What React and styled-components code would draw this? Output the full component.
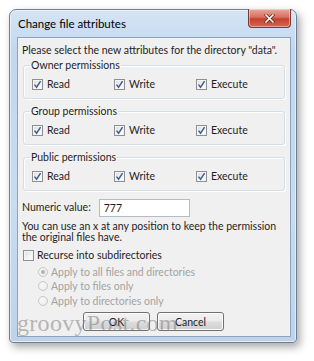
import React from "react";
import styled, { createGlobalStyle } from "styled-components";

const GlobalStyle = createGlobalStyle`
    html, body {
        margin: 0;
        padding: 0;
        background: #ffffff;
    }
    body {
        font-family: Lato, "Open Sans", sans-serif;
        font-size: 10.5px;
        color: #1e1e1e;
    }
`;

const Page = styled.div`
    padding: 9px 0 0 9px;
    width: 314px;
    height: 361px;
    box-sizing: border-box;
`;

const Window = styled.div`
    position: relative;
    width: 288px;
    height: 334px;
    box-sizing: border-box;
    border: 1px solid #6e7f93;
    border-radius: 7px 7px 4px 4px;
    background: linear-gradient(180deg, #d6e5f5 0%, #c2d7ee 12%, #c8dbef 60%, #bed3ea 100%);
    box-shadow: 3px 4px 9px rgba(0, 0, 0, 0.35), inset 0 0 0 1px rgba(255, 255, 255, 0.55);
    display: flex;
    flex-direction: column;
    padding: 0 5px 5px 7px;
`;

const TitleBar = styled.div`
    height: 27px;
    display: flex;
    align-items: flex-start;
    justify-content: space-between;
`;

const Title = styled.div`
    font-size: 11.5px;
    color: #000;
    padding-top: 7px;
    padding-left: 1px;
`;

const CloseButton = styled.div`
    width: 43px;
    height: 19px;
    margin-top: -1px;
    box-sizing: border-box;
    border: 1px solid #7d3a33;
    border-top: none;
    border-radius: 0 0 4px 4px;
    background: linear-gradient(180deg, #e9a99c 0%, #d9705f 45%, #c4422f 55%, #d36a52 100%);
    box-shadow: inset 0 0 0 1px rgba(255, 255, 255, 0.4);
    display: flex;
    align-items: center;
    justify-content: center;
`;

const Client = styled.div`
    flex: 1;
    background: #f0f0f0;
    border: 1px solid #8ea3bd;
    padding: 6px 5px 0 4px;
    display: flex;
    flex-direction: column;
    position: relative;
`;

const Text = styled.div`
    line-height: 12.5px;
    color: ${(p) => (p.$disabled ? "#a3a3a3" : "#1e1e1e")};
`;

const Group = styled.fieldset`
    margin: ${(p) => (p.$first ? "2px" : "6px")} 0 0 1px;
    padding: 0 6px 7px 8px;
    border: 1px solid #d5dde5;
    border-radius: 3px;
    box-shadow: inset 1px 1px 0 #fff, 1px 1px 0 #fff;
    min-width: 0;
`;

const Legend = styled.legend`
    padding: 0 1px;
    margin-left: -2px;
    line-height: 13px;
`;

const CheckRow = styled.div`
    display: grid;
    grid-template-columns: 82px 82px 1fr;
    margin-top: 6px;
`;

const CheckItem = styled.label`
    display: flex;
    align-items: center;
    gap: 4px;
    height: 13px;
    color: #1e1e1e;
`;

const Box = styled.span`
    width: 11px;
    height: 11px;
    box-sizing: border-box;
    border: 1px solid #8e8f8f;
    background: linear-gradient(135deg, #dcdcdc 0%, #f4f4f4 60%, #ffffff 100%);
    box-shadow: inset 0 0 0 1px #f5f5f5;
    display: flex;
    align-items: center;
    justify-content: center;
    flex-shrink: 0;
`;

const Radio = styled.span`
    width: 10px;
    height: 10px;
    box-sizing: border-box;
    border-radius: 50%;
    border: 1px solid #c9c9c9;
    background: radial-gradient(circle at 40% 40%, #fafafa 0%, #e6e6e6 100%);
    display: flex;
    align-items: center;
    justify-content: center;
    flex-shrink: 0;
`;

const Dot = styled.span`
    width: 4px;
    height: 4px;
    border-radius: 50%;
    background: #b2b2b2;
`;

const NumericRow = styled.div`
    display: flex;
    align-items: center;
    margin-top: 8px;
    gap: 8px;
`;

const Input = styled.div`
    width: 91px;
    height: 18px;
    box-sizing: border-box;
    border: 1px solid #b5bcc7;
    background: #fff;
    padding-left: 4px;
    display: flex;
    align-items: center;
`;

const Note = styled(Text)`
    margin-top: 4px;
    line-height: 11.5px;
`;

const RecurseRow = styled.label`
    display: flex;
    align-items: center;
    gap: 3px;
    margin-top: 5px;
    margin-left: 1px;
    height: 13px;
`;

const RadioList = styled.div`
    display: flex;
    flex-direction: column;
    gap: 2px;
    margin: 4px 0 0 16px;
`;

const RadioItem = styled.label`
    display: flex;
    align-items: center;
    gap: 3px;
    height: 12.5px;
    color: #a3a3a3;
`;

const Buttons = styled.div`
    display: flex;
    justify-content: center;
    gap: 7px;
    margin-top: 5px;
`;

const Button = styled.div`
    width: 67px;
    height: 19px;
    box-sizing: border-box;
    border: 1px solid #707070;
    border-radius: 3px;
    background: linear-gradient(180deg, #f2f2f2 0%, #ebebeb 48%, #dddddd 52%, #cfcfcf 100%);
    box-shadow: inset 0 0 0 1px #fcfcfc;
    display: flex;
    align-items: center;
    justify-content: center;
    color: #1e1e1e;
`;

const Watermark = styled.div`
    position: absolute;
    left: -1px;
    bottom: -1px;
    font-family: "Liberation Serif", "DejaVu Serif", serif;
    font-size: 24px;
    letter-spacing: 0.3px;
    color: rgba(120, 120, 120, 0.5);
    pointer-events: none;
`;

const Check = () => (
    <svg width="9" height="9" viewBox="0 0 9 9">
        <path d="M1.5 4.6 L3.6 7.2 L7.6 1.2" fill="none" stroke="#3c5f97" strokeWidth="1.5" />
    </svg>
);

const CloseX = () => (
    <svg width="11" height="9" viewBox="0 0 11 9">
        <path d="M2 1 L9 8 M9 1 L2 8" stroke="#5a1f18" strokeWidth="3" strokeLinecap="square" />
        <path d="M2 1 L9 8 M9 1 L2 8" stroke="#ffffff" strokeWidth="1.6" strokeLinecap="square" />
    </svg>
);

const Checkbox = ({ checked, children }) => (
    <CheckItem>
        <Box>{checked && <Check />}</Box>
        {children}
    </CheckItem>
);

const PermGroup = ({ title, first }) => (
    <Group $first={first}>
        <Legend>{title}</Legend>
        <CheckRow>
            <Checkbox checked>Read</Checkbox>
            <Checkbox checked>Write</Checkbox>
            <Checkbox checked>Execute</Checkbox>
        </CheckRow>
    </Group>
);

export default function App() {
    return (
        <Page>
            <GlobalStyle />
            <Window>
                <TitleBar>
                    <Title>Change file attributes</Title>
                    <CloseButton>
                        <CloseX />
                    </CloseButton>
                </TitleBar>
                <Client>
                    <Text>Please select the new attributes for the directory "data".</Text>
                    <PermGroup title="Owner permissions" first />
                    <PermGroup title="Group permissions" />
                    <PermGroup title="Public permissions" />
                    <NumericRow>
                        <Text>Numeric value:</Text>
                        <Input>777</Input>
                    </NumericRow>
                    <Note>
                        You can use an x at any position to keep the permission the
                        original files have.
                    </Note>
                    <RecurseRow>
                        <Box />
                        Recurse into subdirectories
                    </RecurseRow>
                    <RadioList>
                        <RadioItem>
                            <Radio>
                                <Dot />
                            </Radio>
                            Apply to all files and directories
                        </RadioItem>
                        <RadioItem>
                            <Radio />
                            Apply to files only
                        </RadioItem>
                        <RadioItem>
                            <Radio />
                            Apply to directories only
                        </RadioItem>
                    </RadioList>
                    <Buttons>
                        <Button>OK</Button>
                        <Button>Cancel</Button>
                    </Buttons>
                    <Watermark>groovyPost.com</Watermark>
                </Client>
            </Window>
        </Page>
    );
}
